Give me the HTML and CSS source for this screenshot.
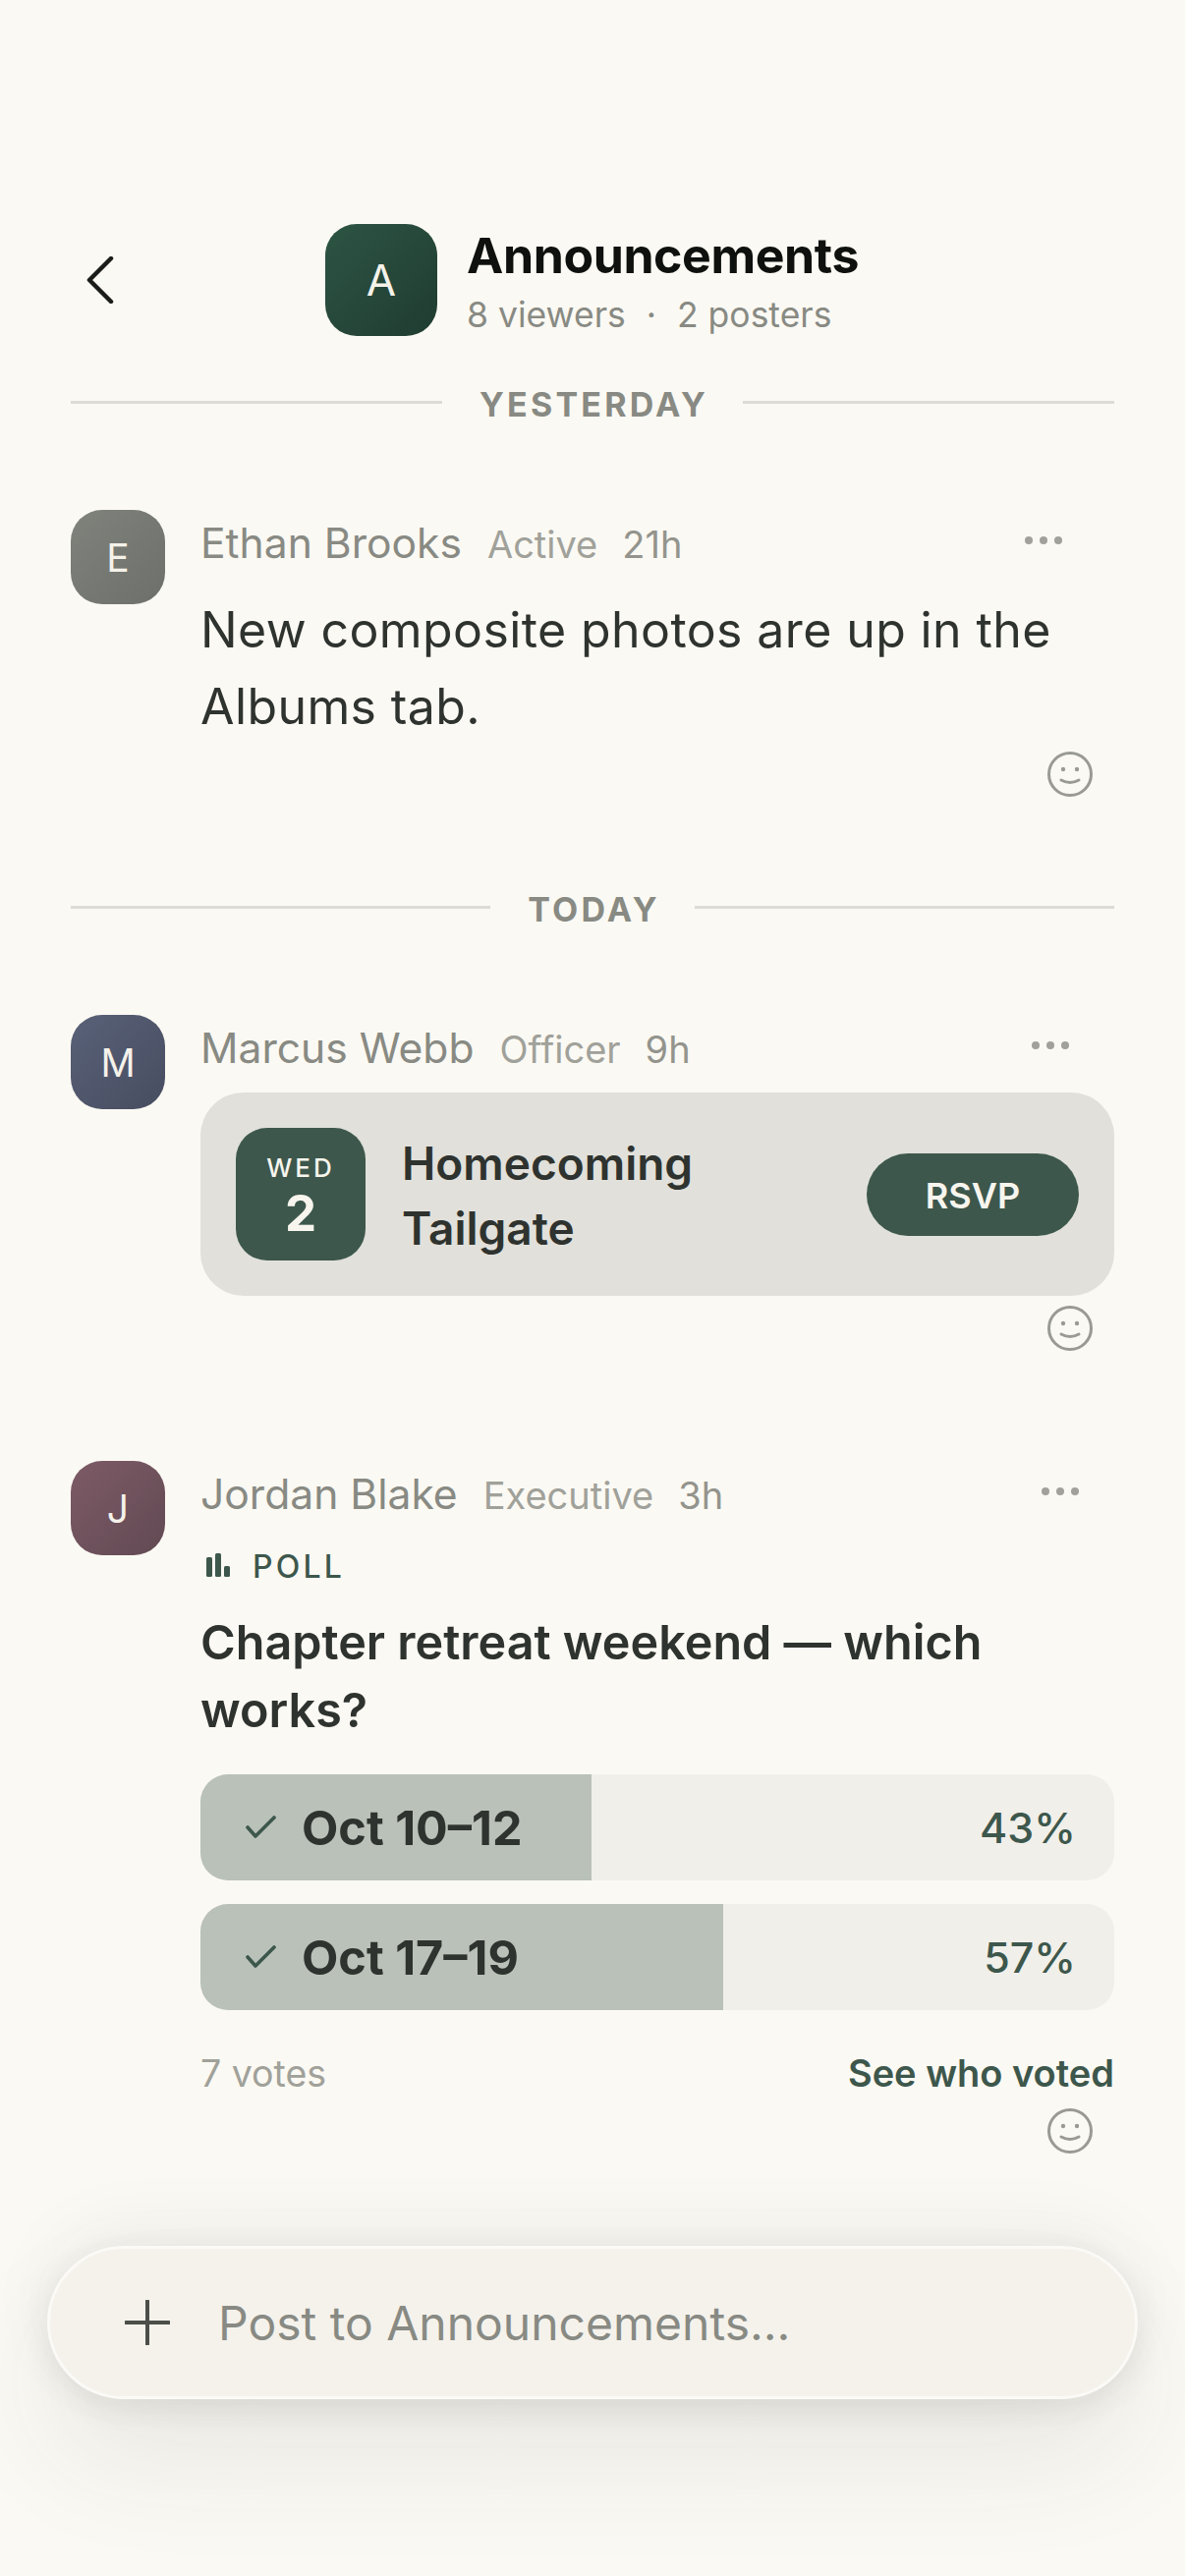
FILE: index.html
```html
<!DOCTYPE html>
<html lang="en">
<head>
    <meta charset="UTF-8">
    <meta name="viewport" content="width=device-width, initial-scale=1.0">
    <title>Announcements</title>
    <link rel="stylesheet" href="styles.css">
</head>
<body>
    <div class="screen">
        <header class="top-bar">
            <svg class="back-icon" viewBox="0 0 28 48" width="28" height="48">
                <path d="M25 2 L3 24 L25 46" />
            </svg>
            <div class="channel">
                <div class="channel-avatar">A</div>
                <div class="channel-info">
                    <h1>Announcements</h1>
                    <p>8 viewers <span class="sep">·</span> 2 posters</p>
                </div>
            </div>
        </header>

        <div class="day-divider day-yesterday"><span>YESTERDAY</span></div>

        <article class="post post-ethan">
            <div class="avatar avatar-grey">E</div>
            <div class="post-body">
                <div class="post-meta">
                    <span class="name">Ethan Brooks</span>
                    <span class="role">Active</span>
                    <span class="time">21h</span>
                    <span class="dots dots-a"><i></i><i></i><i></i></span>
                </div>
                <p class="text">New composite photos are up in the Albums tab.</p>
                <div class="react">
                    <svg class="smile" viewBox="0 0 46 46" width="46" height="46">
                        <circle cx="23" cy="23" r="21.5" />
                        <circle class="eye" cx="16" cy="18" r="2.2" />
                        <circle class="eye" cx="30" cy="18" r="2.2" />
                        <path d="M14 29 Q23 34 32 29" />
                    </svg>
                </div>
            </div>
        </article>

        <div class="day-divider day-today"><span>TODAY</span></div>

        <article class="post post-marcus">
            <div class="avatar avatar-slate">M</div>
            <div class="post-body">
                <div class="post-meta">
                    <span class="name">Marcus Webb</span>
                    <span class="role">Officer</span>
                    <span class="time">9h</span>
                    <span class="dots dots-b"><i></i><i></i><i></i></span>
                </div>
                <div class="event-card">
                    <div class="event-date">
                        <span class="event-day">WED</span>
                        <span class="event-num">2</span>
                    </div>
                    <div class="event-title">Homecoming Tailgate</div>
                    <button class="rsvp">RSVP</button>
                </div>
                <div class="react">
                    <svg class="smile" viewBox="0 0 46 46" width="46" height="46">
                        <circle cx="23" cy="23" r="21.5" />
                        <circle class="eye" cx="16" cy="18" r="2.2" />
                        <circle class="eye" cx="30" cy="18" r="2.2" />
                        <path d="M14 29 Q23 34 32 29" />
                    </svg>
                </div>
            </div>
        </article>

        <article class="post post-jordan">
            <div class="avatar avatar-plum">J</div>
            <div class="post-body">
                <div class="post-meta">
                    <span class="name">Jordan Blake</span>
                    <span class="role">Executive</span>
                    <span class="time">3h</span>
                    <span class="dots dots-c"><i></i><i></i><i></i></span>
                </div>
                <div class="poll-tag">
                    <svg viewBox="0 0 26 26" width="26" height="26">
                        <rect x="1" y="4" width="6" height="20" rx="1.5" />
                        <rect x="10" y="0" width="6" height="24" rx="1.5" />
                        <rect x="19" y="13" width="6" height="11" rx="1.5" />
                    </svg>
                    <span>POLL</span>
                </div>
                <h2 class="question">Chapter retreat weekend — which works?</h2>
                <div class="poll-options">
                    <div class="option">
                        <div class="option-fill" style="width: 42.8%"></div>
                        <div class="option-row">
                            <svg class="check" viewBox="0 0 32 24" width="32" height="24"><path d="M3 12 L11 21 L30 2" /></svg>
                            <span class="option-label">Oct 10–12</span>
                            <span class="option-pct">43%</span>
                        </div>
                    </div>
                    <div class="option">
                        <div class="option-fill" style="width: 57.2%"></div>
                        <div class="option-row">
                            <svg class="check" viewBox="0 0 32 24" width="32" height="24"><path d="M3 12 L11 21 L30 2" /></svg>
                            <span class="option-label">Oct 17–19</span>
                            <span class="option-pct">57%</span>
                        </div>
                    </div>
                </div>
                <div class="poll-foot">
                    <span class="votes">7 votes</span>
                    <span class="who">See who voted</span>
                </div>
                <div class="react react-tight">
                    <svg class="smile" viewBox="0 0 46 46" width="46" height="46">
                        <circle cx="23" cy="23" r="21.5" />
                        <circle class="eye" cx="16" cy="18" r="2.2" />
                        <circle class="eye" cx="30" cy="18" r="2.2" />
                        <path d="M14 29 Q23 34 32 29" />
                    </svg>
                </div>
            </div>
        </article>

        <div class="composer">
            <svg class="plus" viewBox="0 0 46 46" width="46" height="46">
                <path d="M23 1 V45 M1 23 H45" />
            </svg>
            <span class="placeholder">Post to Announcements...</span>
        </div>
    </div>
</body>
</html>
```

FILE: styles.css
```css
:root {
    --bg: #fbf9f3;
    --green: #3d574c;
    --ink: #2f332f;
    --muted: #888a83;
    --light: #a0a19a;
    --rule: #dcdbd5;
}

* {
    margin: 0;
    padding: 0;
    box-sizing: border-box;
}

html,
body {
    height: 100%;
    background-color: var(--bg);
    font-family: Inter, "Liberation Sans", sans-serif;
    overflow: hidden;
}

.screen {
    height: 2622px;
    padding: 228px 72px 0;
    position: relative;
}

/* header */
.top-bar {
    display: flex;
    align-items: center;
    height: 114px;
}

.back-icon {
    margin-left: 16px;
    flex: none;
}

.back-icon path {
    fill: none;
    stroke: #1a1c1a;
    stroke-width: 4.5;
    stroke-linecap: round;
    stroke-linejoin: round;
}

.channel {
    display: flex;
    align-items: center;
    gap: 30px;
    margin-left: 215px;
}

.channel-avatar {
    width: 114px;
    height: 114px;
    border-radius: 32px;
    background: linear-gradient(135deg, #2d5444, #1f3c30);
    color: #f5f2ea;
    font-size: 44px;
    display: flex;
    align-items: center;
    justify-content: center;
}

.channel-info {
    margin-top: 5px;
}

h1 {
    font-size: 50px;
    font-weight: 700;
    line-height: 60px;
    color: #0e110e;
    letter-spacing: -0.4px;
}

.channel-info p {
    margin-top: 7px;
    font-size: 35.5px;
    line-height: 48px;
    color: var(--muted);
}

.sep {
    margin: 0 11px;
}

/* day dividers */
.day-divider {
    display: flex;
    align-items: center;
    gap: 38px;
    color: var(--muted);
    font-size: 34px;
    font-weight: 700;
    letter-spacing: 3.2px;
    line-height: 40px;
}

.day-divider span {
    margin-right: -3px;
}

.day-divider::before,
.day-divider::after {
    content: "";
    flex: 1;
    height: 3px;
    background-color: var(--rule);
    margin-top: -6px;
}

.day-yesterday {
    margin-top: 50px;
}

.day-today {
    margin-top: 95px;
}

/* posts */
.post {
    display: flex;
    gap: 36px;
}

.post-ethan {
    margin-top: 87px;
}

.post-marcus {
    margin-top: 87px;
}

.post-jordan {
    margin-top: 112px;
}

.avatar {
    width: 96px;
    height: 96px;
    flex: none;
    border-radius: 32px;
    color: #f5f2ea;
    font-size: 39px;
    display: flex;
    align-items: center;
    justify-content: center;
}

.avatar-grey {
    background: linear-gradient(135deg, #80827c, #6d706a);
}

.avatar-slate {
    background: linear-gradient(135deg, #596178, #474d60);
}

.avatar-plum {
    background: linear-gradient(135deg, #7d5a66, #614a53);
}

.post-body {
    flex: 1;
    min-width: 0;
}

.post-meta {
    display: flex;
    align-items: baseline;
    height: 68px;
    padding-top: 8px;
    position: relative;
}

.name {
    font-size: 42.6px;
    color: var(--muted);
    margin-right: 26px;
}

.role {
    font-size: 38px;
    color: var(--light);
    margin-right: 25px;
}

.time {
    font-size: 38px;
    color: #93948d;
}

.dots {
    position: absolute;
    top: 27px;
    display: flex;
    gap: 7px;
}

.dots-a {
    left: 839px;
}

.dots-b {
    left: 846px;
}

.dots-c {
    left: 856px;
}

.dots i {
    width: 8px;
    height: 8px;
    border-radius: 50%;
    background-color: var(--light);
}

.text {
    margin-top: 15px;
    margin-bottom: -3px;
    font-size: 50px;
    line-height: 78px;
    letter-spacing: 0.4px;
    color: var(--ink);
}

.react {
    display: flex;
    justify-content: flex-end;
    padding-right: 22px;
    margin-top: 10px;
}

.react-tight {
    margin-top: 13px;
}

.smile {
    display: block;
}

.smile circle,
.smile path {
    fill: none;
    stroke: #999a93;
    stroke-width: 3;
    stroke-linecap: round;
}

.smile .eye {
    fill: #999a93;
    stroke: none;
}

/* event card */
.event-card {
    display: flex;
    align-items: center;
    height: 207px;
    margin-top: 11px;
    padding: 0 36px;
    background-color: #e1e0db;
    border-radius: 44px;
}

.event-date {
    width: 132px;
    height: 135px;
    flex: none;
    padding-top: 8px;
    border-radius: 32px;
    background-color: var(--green);
    color: #f7f5ee;
    display: flex;
    flex-direction: column;
    align-items: center;
    justify-content: center;
}

.event-day {
    font-size: 26px;
    font-weight: 500;
    letter-spacing: 3px;
    line-height: 30px;
}

.event-num {
    font-size: 51px;
    font-weight: 700;
    line-height: 62px;
}

.event-title {
    width: 400px;
    margin-left: 37px;
    padding-top: 2px;
    font-size: 46px;
    font-weight: 600;
    line-height: 66px;
    color: var(--ink);
}

.rsvp {
    margin-left: auto;
    width: 216px;
    height: 84px;
    padding-top: 2px;
    border: none;
    border-radius: 42px;
    background-color: var(--green);
    color: #f7f5ee;
    font-family: inherit;
    font-size: 36px;
    font-weight: 600;
}

/* poll */
.poll-tag {
    display: flex;
    align-items: center;
    gap: 22px;
    padding-left: 5px;
    height: 40px;
    margin-top: 19px;
    color: var(--green);
    font-size: 32px;
    font-weight: 500;
    letter-spacing: 3.2px;
}

.poll-tag svg {
    fill: var(--green);
    flex: none;
}

.question {
    margin-top: 23px;
    font-size: 48.5px;
    font-weight: 600;
    line-height: 69px;
    color: var(--ink);
}

.poll-options {
    display: flex;
    flex-direction: column;
    gap: 24px;
    margin-top: 31px;
}

.option {
    position: relative;
    height: 108px;
    background-color: #f1efea;
    border-radius: 28px;
    overflow: hidden;
}

.option-fill {
    position: absolute;
    top: 0;
    left: 0;
    bottom: 0;
    background-color: #b9c1b9;
}

.option-row {
    position: relative;
    display: flex;
    align-items: center;
    height: 100%;
    padding: 0 39px 0 45px;
}

.check {
    flex: none;
}

.check path {
    fill: none;
    stroke: var(--green);
    stroke-width: 3.6;
    stroke-linecap: round;
    stroke-linejoin: round;
}

.option-label {
    margin-left: 26px;
    font-size: 48.5px;
    font-weight: 700;
    color: var(--ink);
}

.option-pct {
    margin-left: auto;
    font-size: 43px;
    font-weight: 500;
    color: var(--green);
}

.poll-foot {
    display: flex;
    justify-content: space-between;
    align-items: center;
    margin-top: 43px;
    line-height: 44px;
}

.votes {
    font-size: 37.5px;
    color: var(--light);
}

.who {
    font-size: 38px;
    font-weight: 600;
    color: var(--green);
    margin-top: -2px;
}

/* composer */
.composer {
    position: absolute;
    left: 48px;
    right: 48px;
    top: 2286px;
    height: 156px;
    display: flex;
    align-items: center;
    gap: 49px;
    padding-left: 76px;
    background-color: #f5f2ec;
    border: 3px solid #fbfaf7;
    border-radius: 78px;
    box-shadow: 0 8px 30px rgba(60, 60, 50, 0.09), 0 60px 120px rgba(60, 60, 50, 0.09), 0 -20px 70px rgba(60, 60, 50, 0.05);
}

.plus {
    flex: none;
}

.plus path {
    fill: none;
    stroke: #4c4f49;
    stroke-width: 4;
    stroke-linecap: round;
}

.placeholder {
    font-size: 48px;
    color: var(--muted);
}
```
